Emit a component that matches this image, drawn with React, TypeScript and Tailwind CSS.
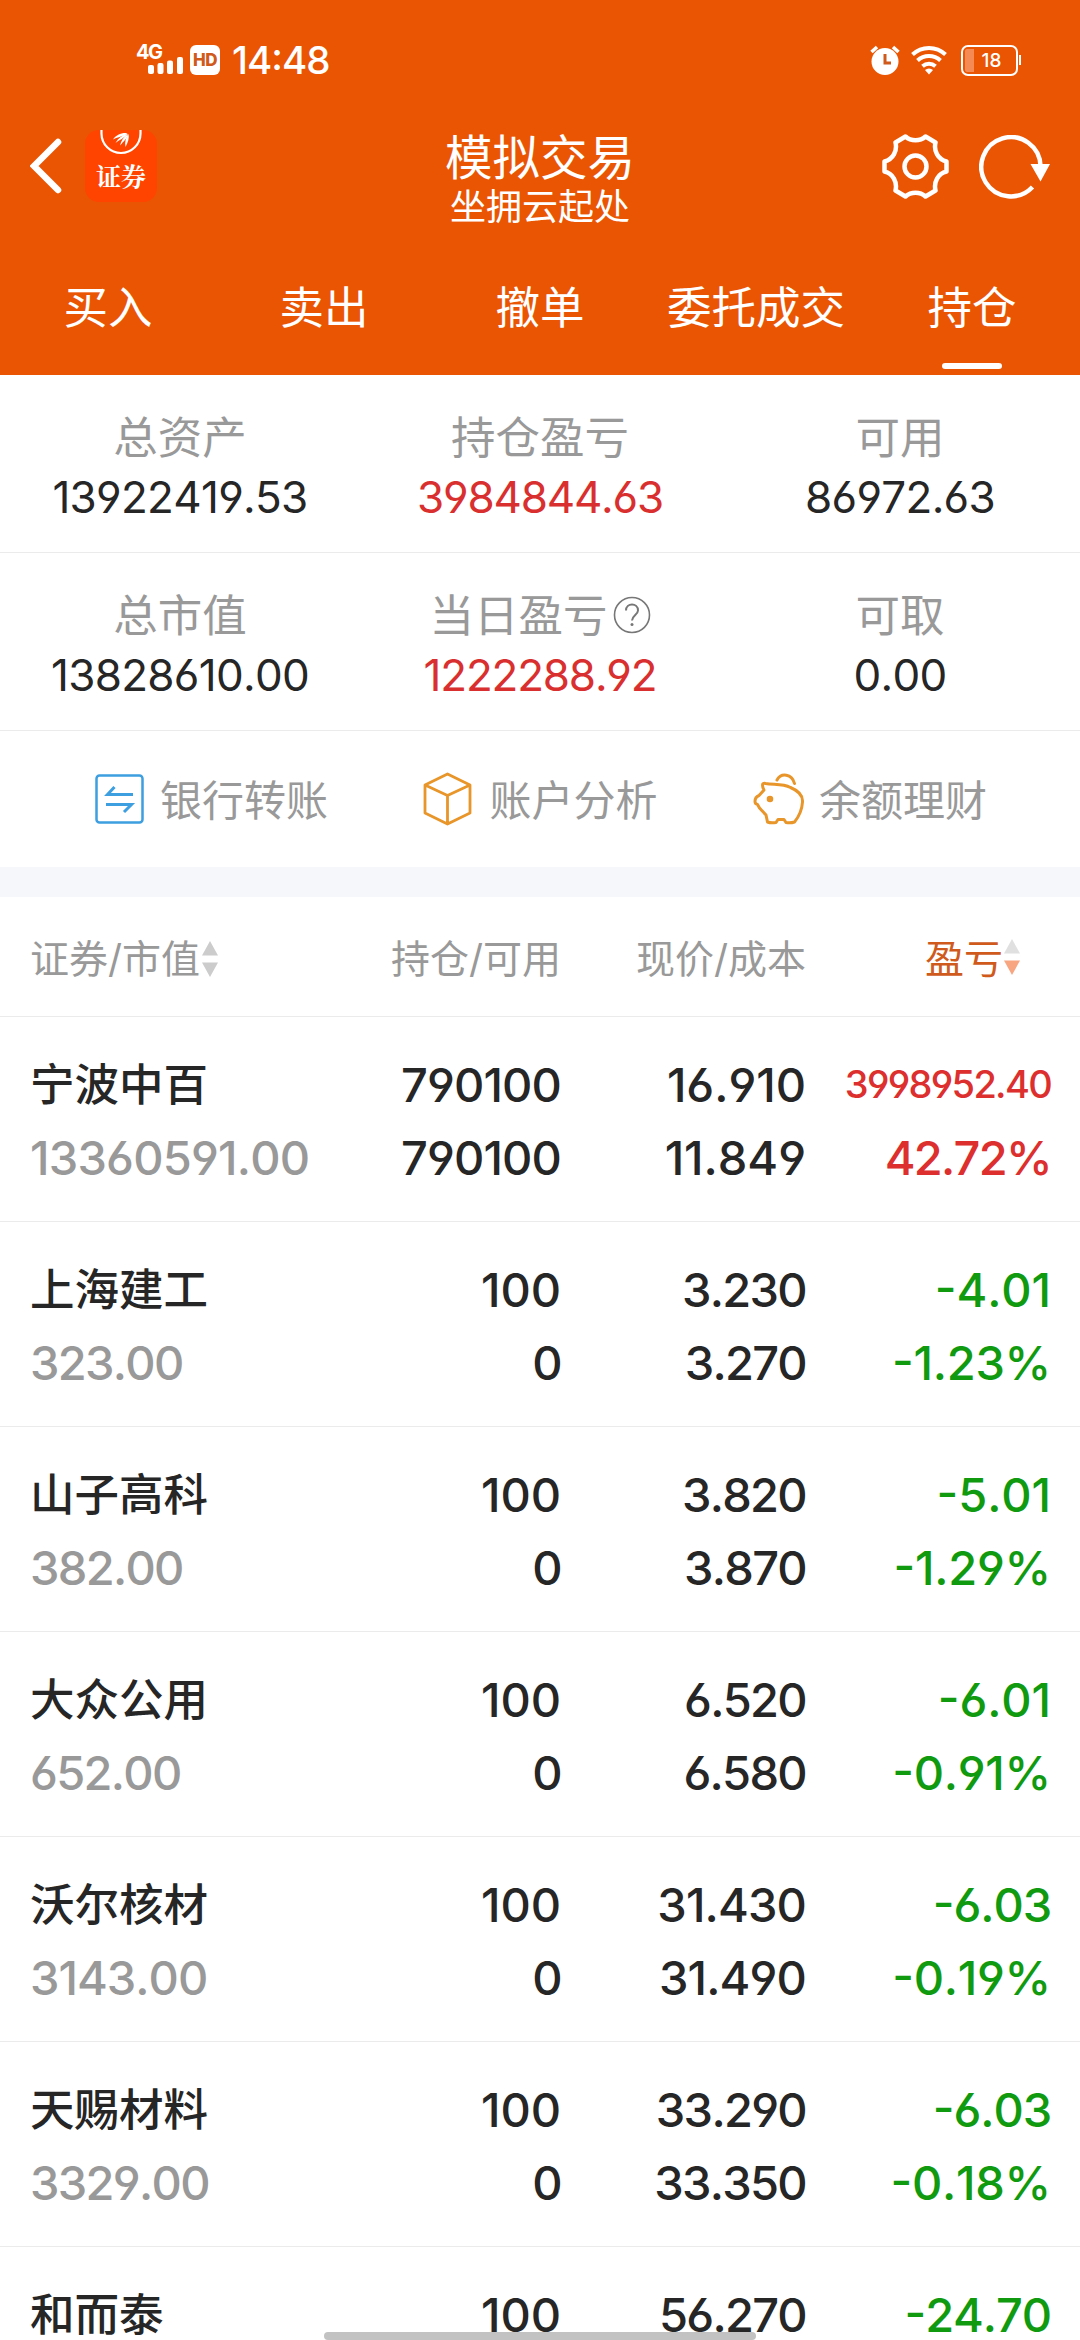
import React from 'react';

interface Holding {
  name: string;
  marketValue?: string;
  quantity: string;
  available?: string;
  price: string;
  cost?: string;
  profit: string;
  profitRate?: string;
}

const tabs = ['买入', '卖出', '撤单', '委托成交', '持仓'];

const holdings: Holding[] = [
  { name: '宁波中百', marketValue: '13360591.00', quantity: '790100', available: '790100', price: '16.910', cost: '11.849', profit: '3998952.40', profitRate: '42.72%' },
  { name: '上海建工', marketValue: '323.00', quantity: '100', available: '0', price: '3.230', cost: '3.270', profit: '-4.01', profitRate: '-1.23%' },
  { name: '山子高科', marketValue: '382.00', quantity: '100', available: '0', price: '3.820', cost: '3.870', profit: '-5.01', profitRate: '-1.29%' },
  { name: '大众公用', marketValue: '652.00', quantity: '100', available: '0', price: '6.520', cost: '6.580', profit: '-6.01', profitRate: '-0.91%' },
  { name: '沃尔核材', marketValue: '3143.00', quantity: '100', available: '0', price: '31.430', cost: '31.490', profit: '-6.03', profitRate: '-0.19%' },
  { name: '天赐材料', marketValue: '3329.00', quantity: '100', available: '0', price: '33.290', cost: '33.350', profit: '-6.03', profitRate: '-0.18%' },
  { name: '和而泰', quantity: '100', price: '56.270', profit: '-24.70' },
];

function StatusBar() {
  return (
    <div className="flex h-[120px] items-center justify-between pl-[136px] pr-[59px] text-white">
      <div className="flex items-center">
        <div className="relative h-8 w-[47px]">
          <span className="absolute -top-[2px] left-0 text-[20px] font-bold leading-none tracking-[-1.5px]">4G</span>
          <svg className="absolute bottom-[2px] right-0" width="35" height="17" viewBox="0 0 35 17" fill="currentColor">
            <rect x="0" y="8" width="6" height="9" rx="2" />
            <rect x="9.5" y="6" width="6" height="11" rx="2" />
            <rect x="19" y="3.5" width="6" height="13.5" rx="2" />
            <rect x="29" y="0" width="6" height="17" rx="2" />
          </svg>
        </div>
        <div className="ml-[7px] flex h-[30px] w-[30px] items-center justify-center rounded-[6px] bg-white text-[17px] font-extrabold leading-none tracking-[-0.5px] text-[#d05a1c]">
          HD
        </div>
        <span className="ml-[12px] text-[38.5px] font-medium leading-none tracking-[-1px]">14:48</span>
      </div>

      <div className="flex items-center">
        <svg width="30" height="30" viewBox="0 0 30 30" fill="none">
          <circle cx="15" cy="16.5" r="13.5" fill="white" />
          <path d="M1.5 7 7 2M28.5 7 23 2" stroke="white" strokeWidth="3.5" />
          <path d="M15 9v9h6" stroke="#d05a1c" strokeWidth="3" />
        </svg>
        <svg className="ml-[11px]" width="36" height="30" viewBox="0 0 36 30" fill="none" stroke="white" strokeWidth="4">
          <path d="M1.5 9.500a24 24 0 0 1 33 0" />
          <path d="M6.5 15.500a17 17 0 0 1 23 0" />
          <path d="M11.5 21.200a10 10 0 0 1 13 0" />
          <path d="m14 25 4 4.500 4-4.500a6 6 0 0 0-8 0Z" fill="white" stroke="none" />
        </svg>
        <div className="ml-[14px] flex h-[31px] w-[57px] items-center rounded-[7px] border-2 border-white p-[2px]">
          <div className="h-full w-[9px] rounded-l-[2px] bg-[#f58a55]" />
          <span className="flex-1 pr-[5px] text-center text-[19px] font-medium leading-none">18</span>
        </div>
        <div className="ml-px h-[10px] w-[2px] bg-white" />
      </div>
    </div>
  );
}

function BrokerLogo() {
  return (
    <div className="flex h-[72px] w-[72px] flex-col items-center rounded-[14px] bg-[#ff4400] text-white">
      <svg width="42" height="26" viewBox="0 0 42 26" fill="none">
        <path d="M1.5 0v3.500a19.500 19.500 0 0 0 39 0V0" stroke="white" strokeWidth="2.2" />
        <path d="M13 9.500C16 5 21 2.500 27 3c-1 3-7 3-14 6.500Z" fill="white" />
        <path d="M15.500 13C18 8.500 22 5 27.500 3.500 26 7 21 9 15.500 13Z" fill="white" />
        <path d="M20 15.500c1-5 4-9 8-11.500-.5 4-4 7-8 11.500Z" fill="white" />
        <path d="M25.500 17c-1-5 0-9 3-13 1 4-.5 8-3 13Z" fill="white" />
      </svg>
      <span className="mt-[7px] font-['Noto_Serif_CJK_SC','Noto_Sans_CJK_SC',serif] text-[25px] font-bold leading-none">证券</span>
    </div>
  );
}

function Header() {
  return (
    <header className="flex h-[375px] shrink-0 flex-col bg-[#ea5504] text-white">
      <StatusBar />
      <div className="flex h-[122px] shrink-0 items-start justify-between px-[30px]">
        <div className="flex w-[220px] items-center pt-[10px]">
          <svg width="32" height="56" viewBox="0 0 32 56" fill="none" stroke="white" strokeWidth="6.5" strokeLinecap="round">
            <path d="M28 4 4 28l24 24" />
          </svg>
          <div className="ml-[23px]">
            <BrokerLogo />
          </div>
        </div>
        <div className="flex flex-col items-center pt-[10px]">
          <h1 className="text-[47.5px] leading-[56px]">模拟交易</h1>
          <p className="text-[36px] leading-[42px]">坐拥云起处</p>
        </div>
        <div className="flex w-[220px] items-center justify-end pt-[14px]">
          <svg width="67" height="65" viewBox="0 0 67 65" fill="none" stroke="white" strokeWidth="4.5" strokeLinejoin="round">
            <path d="M23.500 2.500C29 7.500 38 7.500 43.500 2.500L53.500 8.500C51.500 17 56 25.500 64.500 27.500V37.500C56 39.500 51.500 48 53.500 56.500L43.500 62.500C38 57.500 29 57.500 23.500 62.500L13.500 56.500C15.500 48 11 39.500 2.500 37.500V27.500C11 25.500 15.500 17 13.500 8.500Z" />
            <circle cx="33.500" cy="32.500" r="11" />
          </svg>
          <svg className="ml-[30px]" width="71" height="64" viewBox="0 0 71 64" fill="none" stroke="white" strokeWidth="4.5">
            <path d="M61.500 31A29.600 29.600 0 1 0 53.500 52" />
            <path d="M51.500 29H71L61.500 46.500Z" fill="white" stroke="none" />
          </svg>
        </div>
      </div>
      <nav className="grid flex-1 grid-cols-5">
        {tabs.map((tab) => (
          <div key={tab} className="flex flex-col items-center pt-[36px] text-[44.5px] leading-[60px]">
            {tab}
            {tab === '持仓' && <div className="mt-[25px] h-[6px] w-[60px] rounded-full bg-white" />}
          </div>
        ))}
      </nav>
    </header>
  );
}

interface SummaryCellProps {
  label: string;
  value: string;
  red?: boolean;
  help?: boolean;
}

function SummaryCell({ label, value, red, help }: SummaryCellProps) {
  return (
    <div className="flex flex-col items-center pt-[33px]">
      <div className="flex items-center text-[44.5px] leading-[60px] text-[#999]">
        {label}
        {help && (
          <svg className="mb-[2px] ml-[5px]" width="38" height="38" viewBox="0 0 38 38" fill="none" stroke="#777" strokeWidth="1.6">
            <circle cx="19" cy="19" r="17.5" />
            <path d="M13 14.500c0-8 12-8 12 0 0 4-6 5-6 10" strokeWidth="2" />
            <circle cx="19" cy="28.5" r="1.5" fill="#777" stroke="none" />
          </svg>
        )}
      </div>
      <div className={`text-[44px] leading-[59px] ${red ? 'tracking-[-1.2px] text-[#d9302f]' : 'tracking-[-0.7px] text-[#262626]'}`}>{value}</div>
    </div>
  );
}

function Summary() {
  return (
    <section className="shrink-0">
      <div className="grid h-[178px] grid-cols-3 border-b border-[#ebebeb]">
        <SummaryCell label="总资产" value="13922419.53" />
        <SummaryCell label="持仓盈亏" value="3984844.63" red />
        <SummaryCell label="可用" value="86972.63" />
      </div>
      <div className="grid h-[178px] grid-cols-3 border-b border-[#ebebeb]">
        <SummaryCell label="总市值" value="13828610.00" />
        <SummaryCell label="当日盈亏" value="1222288.92" red help />
        <SummaryCell label="可取" value="0.00" />
      </div>
    </section>
  );
}

function Actions() {
  return (
    <section className="flex h-[136px] shrink-0 items-center justify-between pl-[95px] pr-[93px] text-[42px] leading-[60px] text-[#999]">
      <div className="flex items-center gap-[16px]">
        <svg width="49" height="50" viewBox="0 0 49 50" fill="none" stroke="#3d9fe0" strokeWidth="2.5">
          <rect x="1.5" y="1.5" width="46" height="47" rx="3" />
          <path d="M19.500 13 12.500 20.500H38M11 30.500h25.500L29 38" strokeWidth="3" />
        </svg>
        <span className="pt-[4px]">银行转账</span>
      </div>
      <div className="flex items-center gap-[17px]">
        <svg width="49" height="54" viewBox="0 0 49 54" fill="none" stroke="#e8952a" strokeWidth="2.8" strokeLinejoin="round">
          <path d="M24.500 2 47 13v28L24.500 52 2 41V13ZM2 13l22.500 10.500L47 13M24.500 23.500V52" />
        </svg>
        <span className="pt-[4px]">账户分析</span>
      </div>
      <div className="flex items-center gap-[14px]">
        <svg width="52" height="52" viewBox="0 0 52 52" fill="none" stroke="#e8952a" strokeWidth="3" strokeLinejoin="round" strokeLinecap="round">
          <path d="M9.500 12c0-1.500 1-2 3-1.500 8 1.500 17 0 25 4C46 18 50 23 49.500 29c-.5 8-4 15-8 20-3 1-6 1-8.500.500l-2-3h-6l-2 3c-3 .5-6 .5-8.500-.5L13 42l-6.500-7-2-3.500C2.500 31 2 30.500 2 28.500s0-4.500 4-6L11 17c-1-1.500-1.500-3-1.500-5Z" />
          <path d="M24 7c4-7.500 15-6.500 17.500 3.500" />
          <circle cx="17" cy="26" r="3.300" fill="#e8952a" stroke="none" />
        </svg>
        <span className="pt-[4px]">余额理财</span>
      </div>
    </section>
  );
}

function TableHeader() {
  return (
    <div className="flex h-[120px] shrink-0 items-center border-b border-[#ebebeb] pl-[30px] pt-[4px] text-[39px] leading-[60px] text-[#999]">
      <div className="flex w-[291px] items-center">
        证券/市值
        <svg className="ml-[2px]" width="16" height="36" viewBox="0 0 16 36" fill="#ccc">
          <path d="m8 0 8 14.500H0ZM8 36l8-14.500H0Z" />
        </svg>
      </div>
      <div className="w-[240px] text-right">持仓/可用</div>
      <div className="w-[245px] text-right">现价/成本</div>
      <div className="flex flex-1 items-center justify-end pr-[60px] text-[#cf5a1c]">
        盈亏
        <svg className="mb-[3px] ml-px" width="16" height="36" viewBox="0 0 16 36">
          <path d="m8 0 8 14.500H0Z" fill="#e0e0e0" />
          <path d="m8 36 8-14.500H0Z" fill="#f8a582" />
        </svg>
      </div>
    </div>
  );
}

// "1" is much narrower than the other digits, so open up numbers that contain it
function Figure({ value = '', className }: { value?: string; className?: string }) {
  const ones = value.split('1').length - 1;
  const base = value.startsWith('-') ? -1.1 : -1.7;
  const spacing = value ? base + (5 * ones) / value.length : 0;

  return (
    <div className={className} style={{ letterSpacing: `${spacing}px` }}>
      {value}
    </div>
  );
}

function HoldingRow({ holding }: { holding: Holding }) {
  const gain = !holding.profit.startsWith('-');
  const longProfit = holding.profit.length > 8;

  return (
    <div className="flex h-[205px] shrink-0 border-b border-[#ebebeb] pl-[30px] pt-[31px] text-[47px] font-medium leading-[73px] text-[#262626]">
      <div className="w-[291px]">
        <div className="relative top-px text-[44.5px]">{holding.name}</div>
        <Figure value={holding.marketValue} className="text-[#999]" />
      </div>
      <div className="w-[240px] text-right">
        <Figure value={holding.quantity} />
        <Figure value={holding.available} />
      </div>
      <div className="w-[245px] text-right">
        <Figure value={holding.price} />
        <Figure value={holding.cost} />
      </div>
      <div className={`flex-1 pr-[29px] text-right ${gain ? 'text-[#dc2f2e]' : 'text-[#0f9a10]'}`}>
        <Figure value={holding.profit} className={longProfit ? 'text-[38px]' : ''} />
        <Figure value={holding.profitRate} />
      </div>
    </div>
  );
}

export default function App() {
  return (
    <div className="relative flex h-[2340px] w-[1080px] flex-col overflow-hidden bg-white font-['Inter','Noto_Sans_CJK_SC',sans-serif] [font-feature-settings:'case','cv03','cv04'] [font-kerning:none]">
      <Header />
      <Summary />
      <Actions />
      <div className="h-[30px] shrink-0 bg-[#f6f7fa]" />
      <TableHeader />
      {holdings.map((holding) => (
        <HoldingRow key={holding.name} holding={holding} />
      ))}
      {/* system gesture bar */}
      <div className="absolute bottom-0 left-[324px] h-[8px] w-[432px] rounded-full bg-[#c2c2c2]" />
    </div>
  );
}
